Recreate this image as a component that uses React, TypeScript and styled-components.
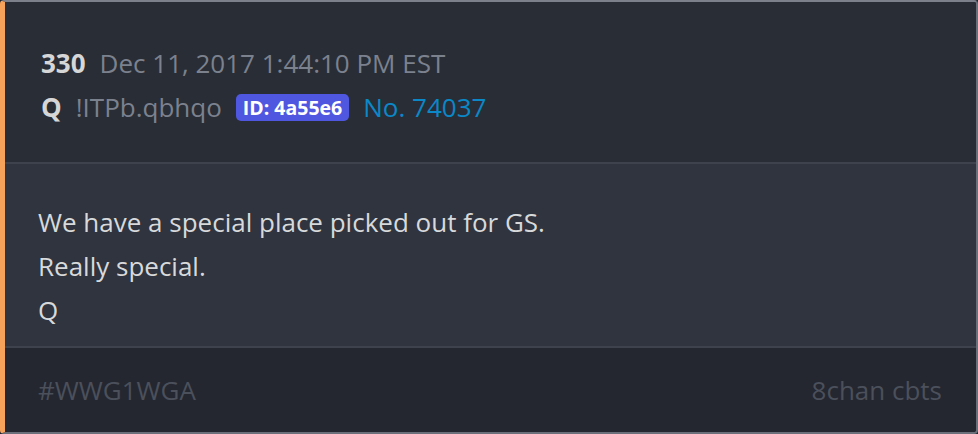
import React from "react";
import styled, { createGlobalStyle } from "styled-components";

const Global = createGlobalStyle`
  html, body { margin: 0; padding: 0; background: #1e2128; }
  body { font-family: "Open Sans", "Noto Sans", sans-serif; }
`;

const Card = styled.div`
  width: 978px;
  height: 434px;
  box-sizing: border-box;
  display: flex;
  flex-direction: column;
  border-top: 2px solid #7b808a;
  border-right: 2px solid #6a6f79;
  border-bottom: 2px solid #6a6f79;
  border-left: 5px solid #f6a25a;
  border-radius: 4px;
  overflow: hidden;
  background: #292d36;
`;

const Header = styled.div`
  height: 162px;
  box-sizing: border-box;
  padding: 39px 0 0 36px;
  background: #292d36;
  display: flex;
  flex-direction: column;
  border-bottom: 2px solid #3d424c;
`;

const Row = styled.div`
  display: flex;
  align-items: center;
  gap: 14px;
  height: 44px;
  font-size: 26px;
`;

const Strong = styled.span`
  font-weight: 700;
  color: #d6d6d6;
`;

const Muted = styled.span`
  color: #7c818e;
`;

const Badge = styled.span`
  background: #4f57e0;
  color: #ffffff;
  font-weight: 700;
  font-size: 19.5px;
  border-radius: 5px;
  padding: 0 7px;
  line-height: 27px;
`;

const Link = styled.span`
  color: #0a88c8;
`;

const Body = styled.div`
  height: 184px;
  box-sizing: border-box;
  padding: 36px 0 0 33px;
  background: #2f343e;
  border-bottom: 2px solid #3d424c;
  display: flex;
  flex-direction: column;
`;

const Line = styled.div`
  font-size: 26px;
  line-height: 44px;
  color: #d8d9da;
`;

const Footer = styled.div`
  flex: 1;
  background: #242730;
  display: flex;
  justify-content: space-between;
  align-items: center;
  padding: 0 34px 0 33px;
  font-size: 26px;
  color: #4b505b;
`;

export default function App() {
  return (
    <>
      <Global />
      <Card>
        <Header>
          <Row>
            <Strong>330</Strong>
            <Muted>Dec 11, 2017 1:44:10 PM EST</Muted>
          </Row>
          <Row>
            <Strong>Q</Strong>
            <Muted>!ITPb.qbhqo</Muted>
            <Badge>ID: 4a55e6</Badge>
            <Link>No. 74037</Link>
          </Row>
        </Header>
        <Body>
          <Line>We have a special place picked out for GS.</Line>
          <Line>Really special.</Line>
          <Line>Q</Line>
        </Body>
        <Footer>
          <span>#WWG1WGA</span>
          <span>8chan cbts</span>
        </Footer>
      </Card>
    </>
  );
}
